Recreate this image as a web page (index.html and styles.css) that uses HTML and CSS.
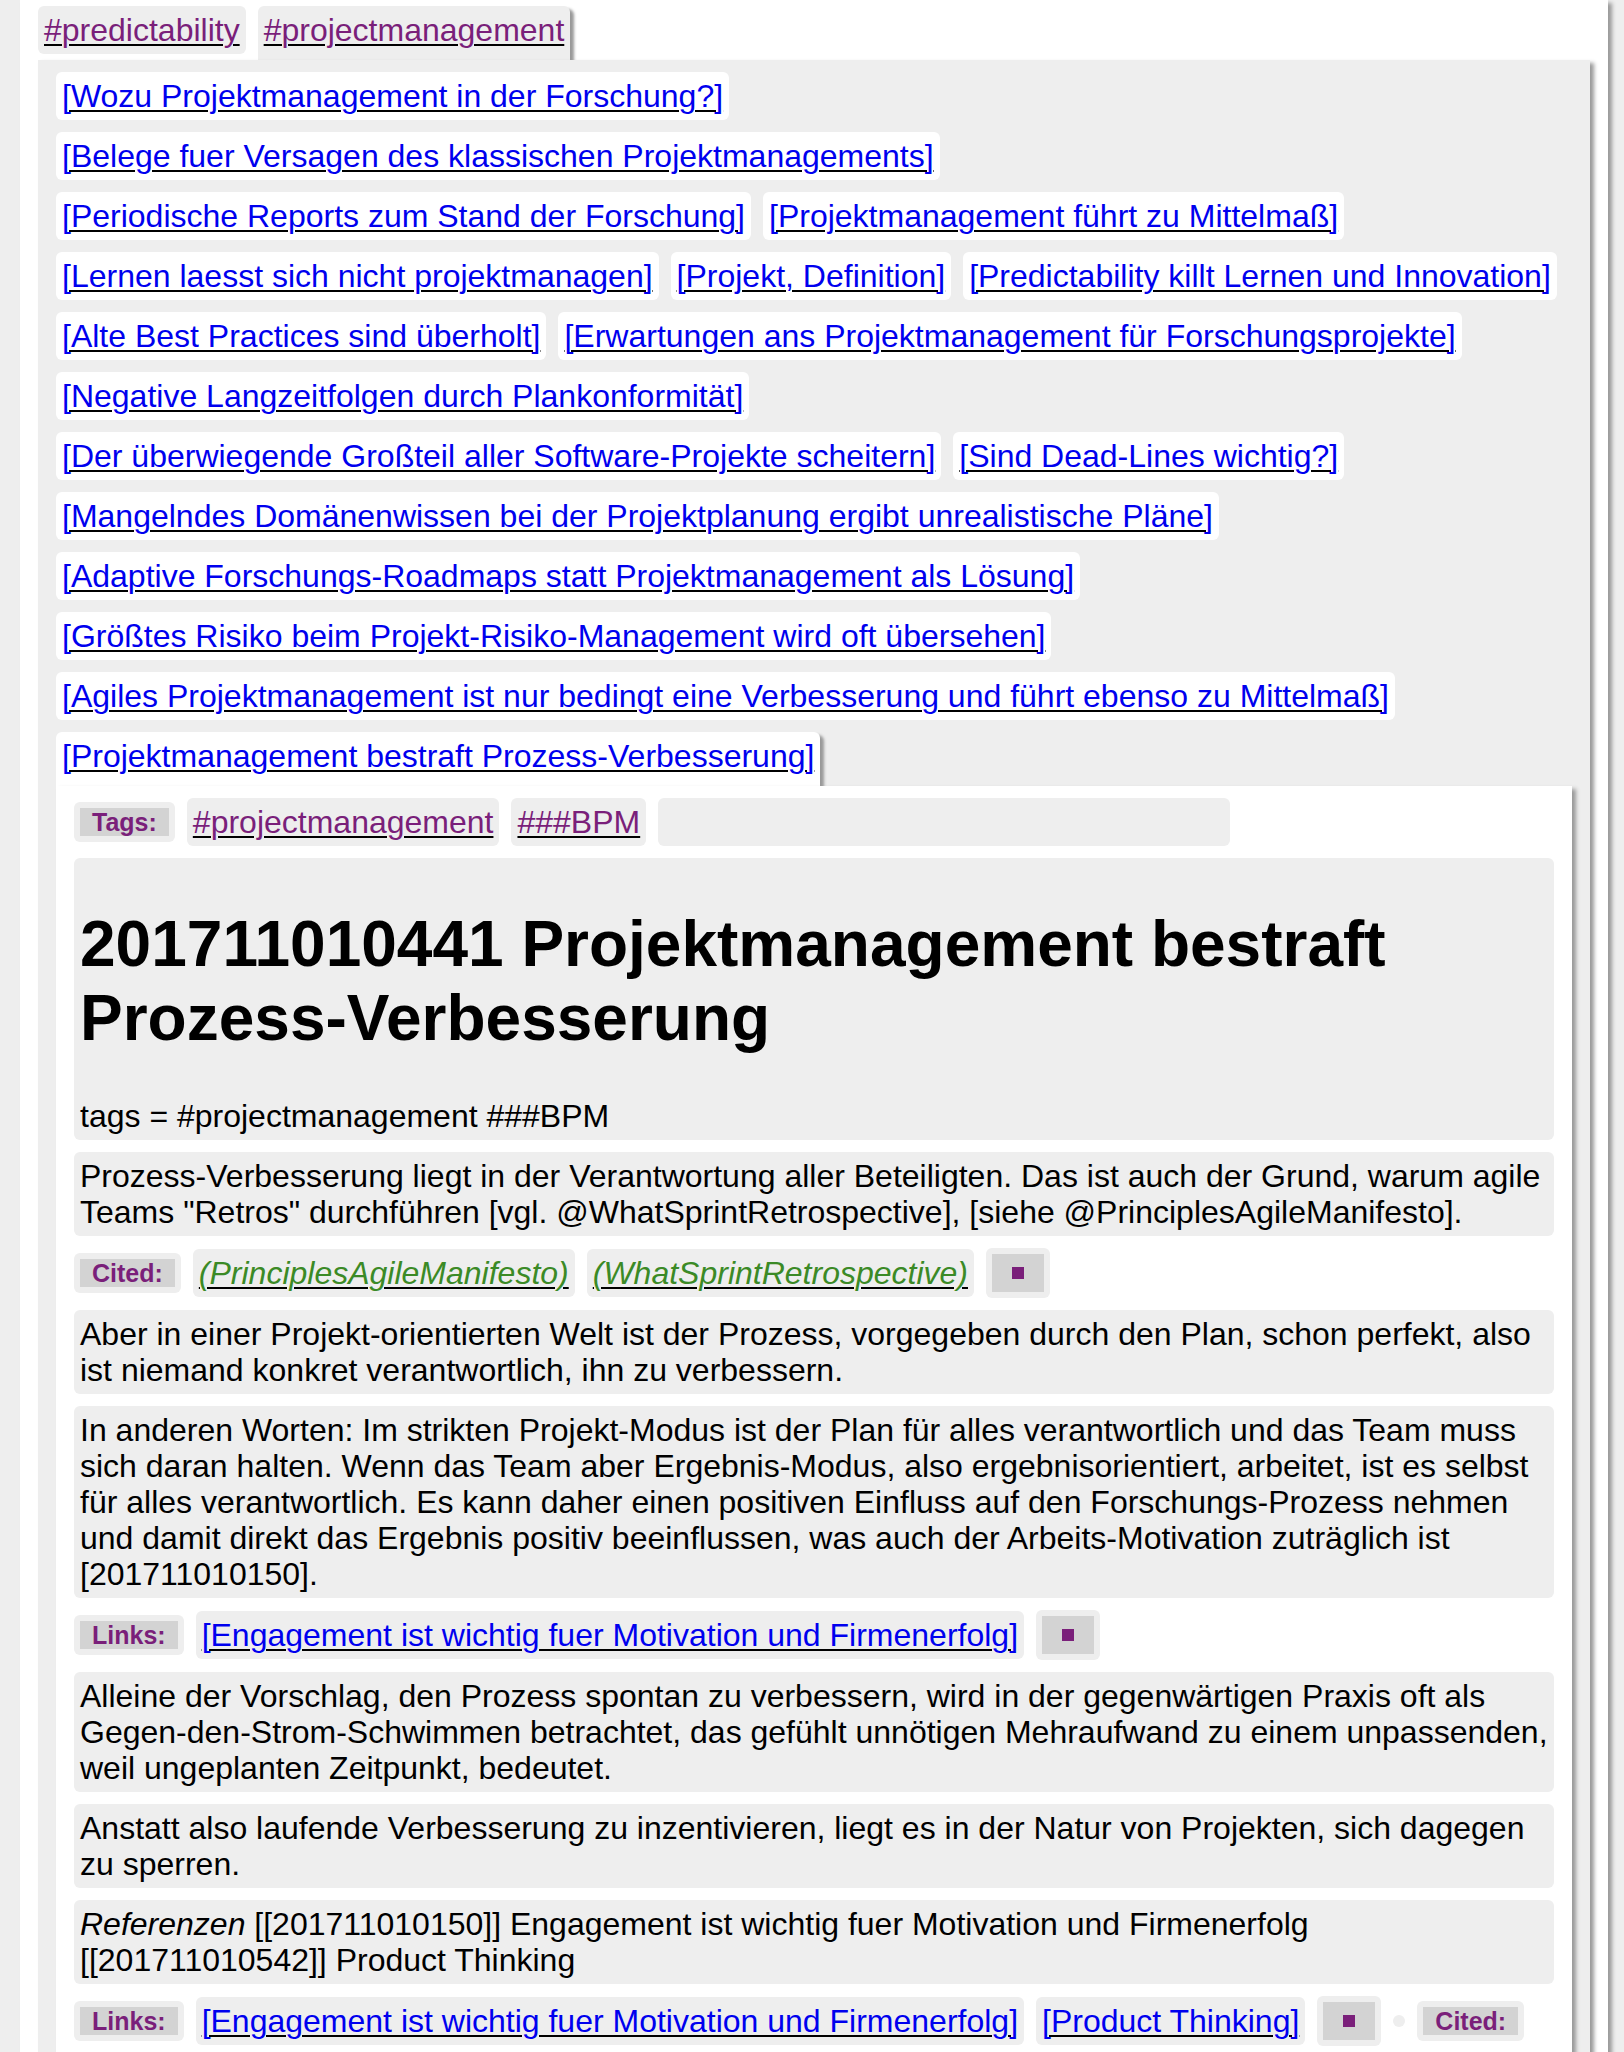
FILE: index.html
```html
<!DOCTYPE html>
<html lang="de">
<head>
<meta charset="utf-8">
<title>Projektmanagement bestraft Prozess-Verbesserung</title>
<link rel="stylesheet" href="styles.css">
</head>
<body>
<div class="page">
  <div class="tabs">
    <span class="chip"><a class="tag" href="#">#predictability</a></span>
    <span class="chip tab"><a class="tag" href="#">#projectmanagement</a></span>
  </div>
  <div class="panel">
    <div class="links">
      <span class="wchip"><a class="lnk" href="#">[Wozu Projektmanagement in der Forschung?]</a></span>
      <span class="wchip"><a class="lnk" href="#">[Belege fuer Versagen des klassischen Projektmanagements]</a></span>
      <span class="wchip"><a class="lnk" href="#">[Periodische Reports zum Stand der Forschung]</a></span>
      <span class="wchip"><a class="lnk" href="#">[Projektmanagement führt zu Mittelmaß]</a></span>
      <span class="wchip"><a class="lnk" href="#">[Lernen laesst sich nicht projektmanagen]</a></span>
      <span class="wchip"><a class="lnk" href="#">[Projekt, Definition]</a></span>
      <span class="wchip"><a class="lnk" href="#">[Predictability killt Lernen und Innovation]</a></span>
      <span class="wchip"><a class="lnk" href="#">[Alte Best Practices sind überholt]</a></span>
      <span class="wchip"><a class="lnk" href="#">[Erwartungen ans Projektmanagement für Forschungsprojekte]</a></span>
      <span class="wchip"><a class="lnk" href="#">[Negative Langzeitfolgen durch Plankonformität]</a></span>
      <span class="wchip"><a class="lnk" href="#">[Der überwiegende Großteil aller Software-Projekte scheitern]</a></span>
      <span class="wchip"><a class="lnk" href="#">[Sind Dead-Lines wichtig?]</a></span>
      <span class="wchip"><a class="lnk" href="#">[Mangelndes Domänenwissen bei der Projektplanung ergibt unrealistische Pläne]</a></span>
      <span class="wchip"><a class="lnk" href="#">[Adaptive Forschungs-Roadmaps statt Projektmanagement als Lösung]</a></span>
      <span class="wchip"><a class="lnk" href="#">[Größtes Risiko beim Projekt-Risiko-Management wird oft übersehen]</a></span>
      <span class="wchip"><a class="lnk" href="#">[Agiles Projektmanagement ist nur bedingt eine Verbesserung und führt ebenso zu Mittelmaß]</a></span>
      <span class="wchip tab"><a class="lnk" href="#">[Projektmanagement bestraft Prozess-Verbesserung]</a></span>
    </div>
    <div class="note">
      <div class="row">
        <span class="lbox"><span class="label">Tags:</span></span>
        <span class="chip"><a class="tag" href="#">#projectmanagement</a></span>
        <span class="chip"><a class="tag" href="#">###BPM</a></span>
        <span class="chip filler"></span>
      </div>
      <div class="block head">
        <h1>201711010441 Projektmanagement bestraft Prozess-Verbesserung</h1>
        <p>tags = #projectmanagement ###BPM</p>
      </div>
      <div class="block">
        <p>Prozess-Verbesserung liegt in der Verantwortung aller Beteiligten. Das ist auch der Grund, warum agile Teams "Retros" durchführen [vgl. @WhatSprintRetrospective], [siehe @PrinciplesAgileManifesto].</p>
      </div>
      <div class="row">
        <span class="lbox"><span class="label">Cited:</span></span>
        <span class="chip"><a class="cite" href="#">(PrinciplesAgileManifesto)</a></span>
        <span class="chip"><a class="cite" href="#">(WhatSprintRetrospective)</a></span>
        <span class="sqbox"><span class="sqin"><span class="sq"></span></span></span>
      </div>
      <div class="block">
        <p>Aber in einer Projekt-orientierten Welt ist der Prozess, vorgegeben durch den Plan, schon perfekt, also ist niemand konkret verantwortlich, ihn zu verbessern.</p>
      </div>
      <div class="block">
        <p>In anderen Worten: Im strikten Projekt-Modus ist der Plan für alles verantwortlich und das Team muss sich daran halten. Wenn das Team aber Ergebnis-Modus, also ergebnisorientiert, arbeitet, ist es selbst für alles verantwortlich. Es kann daher einen positiven Einfluss auf den Forschungs-Prozess nehmen und damit direkt das Ergebnis positiv beeinflussen, was auch der Arbeits-Motivation zuträglich ist [201711010150].</p>
      </div>
      <div class="row">
        <span class="lbox"><span class="label">Links:</span></span>
        <span class="chip"><a class="lnk" href="#">[Engagement ist wichtig fuer Motivation und Firmenerfolg]</a></span>
        <span class="sqbox"><span class="sqin"><span class="sq"></span></span></span>
      </div>
      <div class="block">
        <p>Alleine der Vorschlag, den Prozess spontan zu verbessern, wird in der gegenwärtigen Praxis oft als Gegen-den-Strom-Schwimmen betrachtet, das gefühlt unnötigen Mehraufwand zu einem unpassenden, weil ungeplanten Zeitpunkt, bedeutet.</p>
      </div>
      <div class="block">
        <p>Anstatt also laufende Verbesserung zu inzentivieren, liegt es in der Natur von Projekten, sich dagegen zu sperren.</p>
      </div>
      <div class="block">
        <p><em>Referenzen</em> [[201711010150]] Engagement ist wichtig fuer Motivation und Firmenerfolg<br>[[201711010542]] Product Thinking</p>
      </div>
      <div class="row">
        <span class="lbox"><span class="label">Links:</span></span>
        <span class="chip"><a class="lnk" href="#">[Engagement ist wichtig fuer Motivation und Firmenerfolg]</a></span>
        <span class="chip"><a class="lnk" href="#">[Product Thinking]</a></span>
        <span class="sqbox"><span class="sqin"><span class="sq"></span></span></span>
        <span class="dot"></span>
        <span class="lbox"><span class="label">Cited:</span></span>
      </div>
    </div>
  </div>
</div>
</body>
</html>
```

FILE: styles.css
```css
* { box-sizing: border-box; }
html, body { margin: 0; padding: 0; }
body {
  background: #eeeeee;
  font-family: "Liberation Sans", Arial, Helvetica, sans-serif;
  font-size: 32px;
  line-height: 36px;
  color: #000;
}
a { text-decoration: underline; text-decoration-color: #000; text-decoration-thickness: 2px; text-underline-offset: 3px; }
.tag { color: #7a1f7a; }
.lnk { color: #0000ee; }
.cite { color: #3b8a26; font-style: italic; }

.page {
  margin: 0 16px 0 20px;
  background: #fff;
  box-shadow: 4px 3px 4px #999;
  padding: 6px 18px 0 18px;
  min-height: 2052px;
}
.tabs {
  display: flex;
  flex-wrap: wrap;
  gap: 12px;
  align-items: flex-start;
}
.chip {
  display: inline-block;
  background: #eee;
  border-radius: 6px;
  padding: 6px;
  white-space: nowrap;
}
.chip.tab, .wchip.tab {
  padding-bottom: 12px;
  border-radius: 6px 6px 0 0;
  box-shadow: 4px 3px 3px #999;
  position: relative;
}
.panel {
  background: #eee;
  box-shadow: 4px 3px 4px #999;
  padding: 12px 18px 0 18px;
  position: relative;
  min-height: 1992px;
}
.links {
  display: flex;
  flex-wrap: wrap;
  gap: 12px;
  align-items: flex-start;
}
.wchip {
  display: inline-block;
  background: #fff;
  border-radius: 6px;
  padding: 6px;
  white-space: nowrap;
}
.note {
  background: #fff;
  box-shadow: 4px 3px 4px #999;
  padding: 12px 18px;
  display: flex;
  flex-direction: column;
  gap: 12px;
  position: relative;
  min-height: 1300px;
}
.row {
  display: flex;
  flex-wrap: wrap;
  gap: 12px;
  align-items: center;
}
.lbox {
  display: inline-flex;
  background: #eee;
  border-radius: 6px;
  padding: 6px;
}
.label {
  background: #d3d3d3;
  color: #7a1f7a;
  font-weight: bold;
  font-size: 25px;
  line-height: 28px;
  padding: 0 12px;
}
.filler { width: 572px; height: 48px; }
.sqbox {
  display: inline-flex;
  background: #eee;
  border-radius: 6px;
  padding: 6px;
}
.sqin {
  display: flex;
  align-items: center;
  justify-content: center;
  width: 52px;
  height: 38px;
  background: #d3d3d3;
}
.sq { width: 12px; height: 12px; background: #7a1f7a; }
.dot { width: 12px; height: 12px; border-radius: 50%; background: #eee; }
.block {
  background: #eee;
  border-radius: 6px;
  padding: 6px;
}
.block p { margin: 0; }
.head h1 {
  font-size: 64px;
  line-height: 74px;
  font-weight: bold;
  margin: 43px 0;
}
```
